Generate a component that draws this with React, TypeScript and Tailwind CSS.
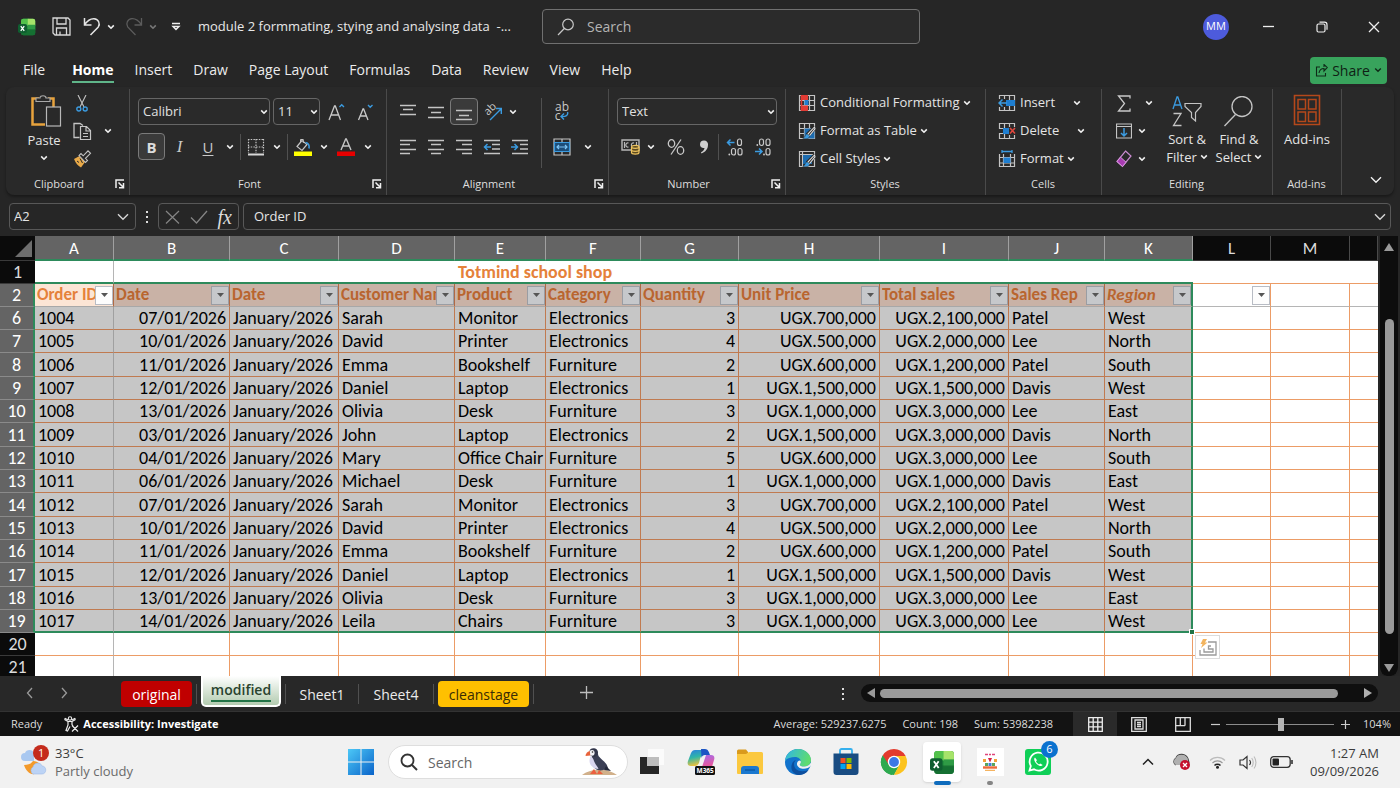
import React from 'react';

type Kids = { children?: React.ReactNode };

const Svg = ({ w = 18, h = 18, className = '', children }: Kids & { w?: number; h?: number; className?: string }) => (
  <svg width={w} height={h} viewBox={`0 0 ${w} ${h}`} fill="none" className={`shrink-0 ${className}`} aria-hidden="true">
    {children}
  </svg>
);

const Chev = ({ className = '' }: { className?: string }) => (
  <Svg w={8} h={6} className={className}>
    <path d="M1.2 1.4 4 4.2 6.8 1.4" stroke="#f0f0f0" strokeWidth="1.6" />
  </Svg>
);

const BigChev = ({ c = '#d6d6d6' }: { c?: string }) => (
  <Svg w={12} h={8}>
    <path d="M1 1.2 6 6.2 11 1.2" stroke={c} strokeWidth="1.4" />
  </Svg>
);

const Btn = ({ label, className = '', children }: Kids & { label: string; className?: string }) => (
  <button type="button" aria-label={label} className={`flex shrink-0 items-center justify-center ${className}`}>
    {children}
  </button>
);

const Drop = ({ label, className = 'w-4' }: { label: string; className?: string }) => (
  <Btn label={label} className={`h-[27px] ${className}`}>
    <Chev />
  </Btn>
);

const Sep = ({ className = 'h-7' }: { className?: string }) => <span className={`w-px shrink-0 bg-[#505050] ${className}`} />;

/* ---------- title bar ---------- */

const ExcelLogo = ({ size }: { size: number }) => (
  <svg width={size} height={size} viewBox="0 0 24 24" aria-hidden="true">
    <rect x="4" y="1" width="19" height="22" rx="3" fill="#1e8a3c" />
    <path d="M4 4a3 3 0 0 1 3-3h7v9H4z" fill="#52c14b" />
    <path d="M13 1h7a3 3 0 0 1 3 3v6H13z" fill="#a6e36a" />
    <path d="M13 9h10v7H13z" fill="#2f9b45" />
    <path d="M4 15h19v5a3 3 0 0 1-3 3H7a3 3 0 0 1-3-3z" fill="#13672f" opacity=".75" />
    <rect x="0" y="8" width="12" height="12" rx="2.4" fill="#0f5e30" />
    <path d="m3.7 10.7 4.6 6.6M8.3 10.7l-4.6 6.6" stroke="#fff" strokeWidth="1.7" />
  </svg>
);

const TitleBar = () => (
  <header className="flex h-[53px] shrink-0 items-center pl-[18px]">
    <ExcelLogo size={18} />
    <Btn label="Save" className="ml-[15px] h-8 w-5">
      <Svg w={19} h={19}>
        <path d="M1 1h15l2 2v15H3l-2-2zM5 1v6h9V1M4.500 18v-7h10v7M8 18v-3.500" stroke="#d8d8d8" strokeWidth="1.3" />
      </Svg>
    </Btn>
    <Btn label="Undo" className="ml-3 h-8 w-[18px]">
      <Svg w={18} h={19}>
        <path d="M1.500 1v7h7M1.500 7.800C4.500 3.500 7.500 1.500 11 1.700c4.500.300 6.500 5 4.300 8.200L7.500 18" stroke="#e4e4e4" strokeWidth="1.500" />
      </Svg>
    </Btn>
    <Drop label="Undo list" className="ml-1 w-3" />
    <Btn label="Redo" className="ml-2 h-8 w-[18px]">
      <Svg w={18} h={19}>
        <path d="M16.500 1v7h-7M16.500 7.800C13.500 3.500 10.500 1.500 7 1.700 2.500 2 .500 6.700 2.700 9.900L10.500 18" stroke="#5c5c5c" strokeWidth="1.3" />
      </Svg>
    </Btn>
    <span className="flex h-7 w-5 items-center justify-center opacity-40">
      <Chev />
    </span>
    <Btn label="Customize Quick Access Toolbar" className="ml-[3px] h-8 w-5">
      <Svg w={10} h={9}>
        <path d="M1 1.500h8M2 4.500 5 7.500l3-3z" stroke="#eee" strokeWidth="1.4" />
      </Svg>
    </Btn>
    <span className="ml-3 w-[330px] truncate text-[13px] text-[#e8e8e8]">module 2 formmating, stying and analysing data&nbsp; -...</span>
    <label className="ml-[14px] flex h-[35px] w-[378px] items-center gap-3 rounded border border-[#707070] bg-[#2b2b2b] px-3.5">
      <Svg w={18} h={18}>
        <circle cx="11" cy="6.500" r="5.300" stroke="#c8c8c8" strokeWidth="1.2" />
        <path d="M7.300 10.500 1 17" stroke="#c8c8c8" strokeWidth="1.2" />
      </Svg>
      <input aria-label="Search" placeholder="Search" className="w-full bg-transparent text-[14px] outline-none placeholder:text-[#b4b4b4]" />
    </label>
    <div className="ml-auto flex items-center">
      <button type="button" className="flex h-[26px] w-[26px] items-center justify-center rounded-full bg-[#4d5bdc] text-[11px] text-white">
        MM
      </button>
      <Btn label="Minimize" className="ml-[14px] h-10 w-[52px]">
        <Svg w={12} h={12}>
          <path d="M0 5.500h11" stroke="#eee" strokeWidth="1.3" />
        </Svg>
      </Btn>
      <Btn label="Restore" className="h-10 w-[53px]">
        <Svg w={12} h={12}>
          <rect x="1" y="3" width="8" height="8" rx="1.500" stroke="#eee" strokeWidth="1.2" />
          <path d="M3.500 1.200h5a2.500 2.500 0 0 1 2.500 2.500v5" stroke="#eee" strokeWidth="1.2" />
        </Svg>
      </Btn>
      <Btn label="Close" className="h-10 w-[52px]">
        <Svg w={12} h={12}>
          <path d="m1 1 10 10M11 1 1 11" stroke="#eee" strokeWidth="1.3" />
        </Svg>
      </Btn>
    </div>
  </header>
);

const menu = ['File', 'Home', 'Insert', 'Draw', 'Page Layout', 'Formulas', 'Data', 'Review', 'View', 'Help'];

const MenuBar = () => (
  <nav className="flex h-[34px] shrink-0 items-center pr-[13px] pl-[23px]">
    <div className="flex gap-[21px] pt-0.5">
      {menu.map((m) =>
        m === 'Home' ? (
          <button key={m} type="button" className="ml-1.5 border-b-2 border-[#5fb589] pb-px text-[14px] leading-[20px] font-bold text-white">
            {m}
          </button>
        ) : (
          <button key={m} type="button" className="border-b-2 border-transparent pb-px text-[14px] leading-[20px] text-[#ececec]">
            {m}
          </button>
        ),
      )}
    </div>
    <button type="button" className="ml-auto flex h-[27px] w-[77px] items-center justify-center gap-1 rounded bg-[#38a35c] text-[14px] text-[#0f1f15]">
      <Svg w={13} h={13}>
        <path d="M5 3H1.500v9h9V9M4 9c.500-3 2.500-4.500 5-4.500V7l3.300-3.500L9 .500V3" stroke="#0f2a18" strokeWidth="1.1" />
      </Svg>
      Share
      <Svg w={8} h={6}>
        <path d="M1.200 1.400 4 4.200 6.800 1.400" stroke="#0f2a18" strokeWidth="1.400" />
      </Svg>
    </button>
  </nav>
);

/* ---------- ribbon ---------- */

const Launcher = ({ label }: { label: string }) => (
  <Btn label={label} className="h-4 w-4">
    <Svg w={10} h={10}>
      <path d="M1 9V1h8M3.500 3.500 8 8M8.500 4v4.800H4" stroke="#f0f0f0" strokeWidth="1.5" />
    </Svg>
  </Btn>
);

const Group = ({ name, launcher, className = '', children }: Kids & { name: string; launcher?: boolean; className?: string }) => (
  <section aria-label={name} className={`flex shrink-0 flex-col border-r border-[#4a4a4a] ${className}`}>
    <div className="flex h-[87px]">{children}</div>
    <div className="flex h-4 items-center pr-px text-[11px] leading-4 text-[#dedede]">
      <span className="flex-1 text-center">{name}</span>
      {launcher && <Launcher label={`${name} settings`} />}
    </div>
  </section>
);

const Pick = ({ label, value, className }: { label: string; value: string; className: string }) => (
  <span className={`relative block ${className}`}>
    <select aria-label={label} defaultValue={value} className="h-[27px] w-full appearance-none rounded border border-[#666] bg-[#2a2a2a] pl-1 text-[13px] text-[#e0e0e0]">
      <option>{value}</option>
    </select>
    <Chev className="pointer-events-none absolute top-[11px] right-[2px]" />
  </span>
);

const Lines = ({ rows }: { rows: [number, number, number][] }) => (
  <Svg w={16} h={18}>
    {rows.map(([x1, x2, y]) => (
      <path key={y} d={`M${x1} ${y}.500H${x2}`} stroke="#c4c4c4" strokeWidth="1.3" />
    ))}
  </Svg>
);

const BlueArrow = ({ d }: { d: string }) => <path d={d} stroke="#3b9be0" strokeWidth="1.5" />;

const Grid = ({ children }: Kids) => (
  <Svg w={18} h={18}>
    <path d="M1.500 1.500h15v15h-15zM1.500 6.500h15M1.500 11.500h15M6.500 1.500v15M11.500 1.500v15" stroke="#c4c4c4" strokeWidth="1.2" />
    {children}
  </Svg>
);

const Brush = () => (
  <>
    <path d="M17.500 5 9.500 13" stroke="#292929" strokeWidth="4.500" />
    <path d="m16.500 5-6.800 7.300 1.700 1.500 5.600-7z" stroke="#e0e0e0" strokeWidth="1.1" />
    <path d="M9.500 12c-2 0-2.500 1.500-2.800 3l-2 1.200c2.500 1.200 7 .700 7-2.300z" fill="#3b9be0" stroke="#292929" strokeWidth=".5" />
  </>
);

const MenuButton = ({ icon, text, gap = 'gap-[3px]' }: { icon: React.ReactNode; text: string; gap?: string }) => (
  <button type="button" className="flex h-7 items-center text-[13px] whitespace-nowrap text-[#e4e4e4]">
    {icon}
    <span className={`ml-1 flex items-center ${gap}`}>
      {text}
      <Chev />
    </span>
  </button>
);

const Ribbon = () => (
  <div className="mx-[6px] flex h-[108px] shrink-0 overflow-hidden rounded-lg bg-[#292929] pt-[2px] shadow-[0_2px_3px_rgba(0,0,0,0.35)]">
    <Group name="Clipboard" launcher className="w-[124px]">
      <button type="button" className="ml-5 flex w-9 flex-col items-center pt-[6px] text-[13px] leading-[18px] text-[#e4e4e4]">
        <Svg w={32} h={36} className="ml-1">
          <path d="M9 3.500H2.500v26H15M18 3.500h5.500V12" stroke="#e8a33d" strokeWidth="2.5" />
          <path d="M6 6.500V3h4c0-3 6-3 6 0h4v3.500z" fill="#292929" stroke="#a8a8a8" strokeWidth="1.2" />
          <rect x="16.500" y="12" width="14" height="19" fill="#292929" stroke="#b8b8b8" strokeWidth="1.2" />
        </Svg>
        Paste
        <Chev className="mt-1.5" />
      </button>
      <div className="ml-[10px] flex flex-col">
        <Btn label="Cut" className="h-7 w-5">
          <Svg w={12} h={17}>
            <path d="m2 0 6 12M10 0 4 12" stroke="#c4c4c4" strokeWidth="1.1" />
            <circle cx="2.800" cy="14" r="2" stroke="#3b9be0" strokeWidth="1.4" />
            <circle cx="9.200" cy="14" r="2" stroke="#3b9be0" strokeWidth="1.4" />
          </Svg>
        </Btn>
        <div className="flex">
          <Btn label="Copy" className="h-7 w-5">
            <Svg w={19} h={19}>
              <path d="M6.500 15.500H1v-14h6l3 2" stroke="#c4c4c4" strokeWidth="1.3" />
              <path d="M7.500 4.500h6l4 4v9h-10zM13 4.500V9h4.500M10 11.500h5M10 14.500h5" stroke="#c4c4c4" strokeWidth="1.2" />
            </Svg>
          </Btn>
          <Drop label="Copy options" className="ml-2.5 w-3" />
        </div>
        <Btn label="Format Painter" className="h-7 w-5">
          <Svg w={19} h={18}>
            <path d="m1 9 5.500-3 5.500 6-4 5.500C5 16 2.500 13 1 9z" fill="#e8a948" />
            <path d="m4 11 2 1.500M7 8.500 9.500 13" stroke="#292929" strokeWidth="1" />
            <path d="m6 5.500 6.500 7 2-2-2-2.200 5-5-2.500-2.500-4.800 5L8 3.500z" fill="#292929" stroke="#c4c4c4" strokeWidth="1.1" />
          </Svg>
        </Btn>
      </div>
    </Group>

    <Group name="Font" launcher className="w-[257px]">
      <div className="flex flex-col gap-2 pt-[9px] pl-[8px]">
        <div className="flex items-center">
          <Pick label="Font" value="Calibri" className="w-[132px]" />
          <Pick label="Font size" value="11" className="ml-[3px] w-[47px]" />
          <Btn label="Increase font size" className="ml-2 h-[27px] w-[17px]">
            <Svg w={17} h={18}>
              <path d="M1 17 6.500 3h.8L12.500 17M3 12h7.800" stroke="#c8c8c8" strokeWidth="1.3" />
              <path d="m11.500 4 2.200-2.200L16 4" stroke="#3b9be0" strokeWidth="1.4" />
            </Svg>
          </Btn>
          <Btn label="Decrease font size" className="ml-3 h-[27px] w-[17px]">
            <Svg w={17} h={18}>
              <path d="M1.500 17 6 6h.6L11 17M3 13h6.500" stroke="#c8c8c8" strokeWidth="1.3" />
              <path d="m11 2 2.200 2.200L15.500 2" stroke="#3b9be0" strokeWidth="1.4" />
            </Svg>
          </Btn>
        </div>
        <div className="flex items-center">
          <button type="button" className="h-[27px] w-[27px] rounded border border-[#7a7a7a] bg-[#3a3a3a] text-[15px] leading-[22px] font-bold text-[#dcdcdc]">B</button>
          <button type="button" className="h-[27px] w-[29px] font-['Liberation_Serif',serif] text-[17px] leading-[22px] text-[#c8c8c8] italic">I</button>
          <button type="button" className="h-[27px] w-7 text-[15px] leading-[22px] text-[#c8c8c8] underline underline-offset-2">U</button>
          <Drop label="Underline options" />
          <Sep className="mx-[2px] h-[26px]" />
          <Btn label="Borders" className="h-[27px] w-[26px]">
            <Svg w={18} h={18}>
              <path d="M1.500 1v14M16.500 1v14M1 1.500h16M1 9h16M9 1v14" stroke="#c4c4c4" strokeWidth="1.2" strokeDasharray="1.5 1.2" />
              <path d="M1 16.500h16" stroke="#d8d8d8" strokeWidth="1.8" />
            </Svg>
          </Btn>
          <Drop label="Border options" />
          <Sep className="mx-[2px] h-[26px]" />
          <Btn label="Fill Color" className="h-[27px] w-[26px]">
            <Svg w={18} h={18}>
              <path d="M8 2.500 3 8.500l5 4 5-6z" stroke="#c4c4c4" strokeWidth="1.2" />
              <path d="M6.500 5V1.500h2.800V5" stroke="#c4c4c4" strokeWidth="1" />
              <path d="M11.500 4.500c3 .500 4 3 3.500 6" stroke="#3b9be0" strokeWidth="1.600" />
              <path d="M0 13.500h18v4.500H0z" fill="#ffff00" />
            </Svg>
          </Btn>
          <Drop label="Fill options" />
          <Btn label="Font Color" className="h-[27px] w-7">
            <Svg w={18} h={18}>
              <path d="M4 12 8.700 1h.6L14 12M5.700 8h6.600" stroke="#c4c4c4" strokeWidth="1.4" />
              <path d="M0 13.500h18v4.500H0z" fill="#e60000" />
            </Svg>
          </Btn>
          <Drop label="Font color options" />
        </div>
      </div>
    </Group>

    <Group name="Alignment" launcher className="w-[222px]">
      <div className="flex flex-col gap-2 pt-[9px] pl-[7px]">
        <div className="flex">
          <Btn label="Top Align" className="h-[27px] w-7">
            <Lines rows={[[0, 16, 2], [3, 13, 6], [0, 16, 11]]} />
          </Btn>
          <Btn label="Middle Align" className="h-[27px] w-7">
            <Lines rows={[[0, 16, 4], [3, 13, 9], [0, 16, 14]]} />
          </Btn>
          <Btn label="Bottom Align" className="h-[27px] w-7 rounded border border-[#7a7a7a] bg-[#3a3a3a]">
            <Lines rows={[[0, 16, 7], [3, 13, 12], [0, 16, 16]]} />
          </Btn>
          <Btn label="Orientation" className="h-[27px] w-[30px]">
            <Svg w={20} h={20} className="overflow-visible">
              <text x="0" y="0" transform="translate(5 14) rotate(-45)" fontSize="11" fill="#c8c8c8">ab</text>
              <path d="M7 18 18 7M13 6.500h5.300V12" stroke="#3b9be0" strokeWidth="1.4" />
            </Svg>
          </Btn>
          <Drop label="Orientation options" className="w-[10px]" />
        </div>
        <div className="flex">
          <Btn label="Align Left" className="h-[27px] w-7">
            <Lines rows={[[0, 16, 2], [0, 10, 6], [0, 16, 11], [0, 10, 15]]} />
          </Btn>
          <Btn label="Center" className="h-[27px] w-7">
            <Lines rows={[[0, 16, 2], [3, 13, 6], [0, 16, 11], [3, 13, 15]]} />
          </Btn>
          <Btn label="Align Right" className="h-[27px] w-7">
            <Lines rows={[[0, 16, 2], [6, 16, 6], [0, 16, 11], [6, 16, 15]]} />
          </Btn>
          <Btn label="Decrease Indent" className="h-[27px] w-7">
            <Svg w={18} h={18}>
              <path d="M1 2.500h16M9 6.500h8M9 11h8M1 15.500h16" stroke="#c4c4c4" strokeWidth="1.3" />
              <BlueArrow d="M8 9H1.500M4.500 6 1.500 9l3 3" />
            </Svg>
          </Btn>
          <Btn label="Increase Indent" className="h-[27px] w-7">
            <Svg w={18} h={18}>
              <path d="M1 2.500h16M9 6.500h8M9 11h8M1 15.500h16" stroke="#c4c4c4" strokeWidth="1.3" />
              <BlueArrow d="M0 9h6.500M3.500 6l3 3-3 3" />
            </Svg>
          </Btn>
        </div>
      </div>
      <Sep className="mt-[9px] ml-[7px] h-[70px]" />
      <div className="flex flex-col gap-2 pt-[9px] pl-1.5">
        <Btn label="Wrap Text" className="h-[27px] w-7">
          <span className="flex flex-col text-[12px] leading-[9px] text-[#c8c8c8]">
            <span>ab</span>
            <span className="flex">
              c
              <Svg w={9} h={9} className="mt-px">
                <path d="M7.500 0c1 3-1.500 5-6.500 4.500M4 1.500l-3 3 3 3" stroke="#3b9be0" strokeWidth="1.4" />
              </Svg>
            </span>
          </span>
        </Btn>
        <div className="flex">
          <Btn label="Merge and Center" className="h-[27px] w-7">
            <Svg w={18} h={18}>
              <path d="M1 1h16v16H1zM9 1v4M9 13v4" stroke="#c4c4c4" strokeWidth="1.2" />
              <path d="M1.500 4.500h15v9h-15z" fill="#1c4d78" stroke="#3b9be0" strokeWidth="1.2" />
              <path d="M4 9h10M6 7 4 9l2 2M12 7l2 2-2 2" stroke="#7cc4f5" strokeWidth="1.2" />
            </Svg>
          </Btn>
          <Drop label="Merge options" className="ml-1 w-4" />
        </div>
      </div>
    </Group>

    <Group name="Number" launcher className="w-[177px]">
      <div className="flex flex-col gap-2 pt-[9px] pl-2">
        <Pick label="Number Format" value="Text" className="w-[160px]" />
        <div className="flex items-center">
          <Btn label="Accounting Format" className="h-[27px] w-[26px]">
            <Svg w={19} h={17}>
              <path d="M1 2h17v10H1z" stroke="#b8b8b8" strokeWidth="1.4" />
              <path d="M7.500 5c-3.500-1-3.500 5 0 4M13 5c-3.500-1-3.500 5 0 4M3.500 4v6M15.500 4v3" stroke="#b8b8b8" strokeWidth="1.200" />
              <path d="M10.500 9c0-2.200 7.500-2.200 7.500 0v5.500c0 2.200-7.500 2.200-7.500 0z" fill="#5b4a20" stroke="#eec35f" strokeWidth="1.2" />
              <path d="M10.500 9c0 1.800 7.500 1.800 7.500 0M10.500 12c0 1.800 7.500 1.800 7.500 0" stroke="#eec35f" strokeWidth="1.100" />
            </Svg>
          </Btn>
          <Drop label="Accounting options" />
          <Btn label="Percent Style" className="ml-[3px] h-[27px] w-7">
            <Svg w={18} h={18}>
              <path d="M14 1.500 4 16.500" stroke="#c8c8c8" strokeWidth="1.3" />
              <ellipse cx="4.500" cy="5.500" rx="3.200" ry="3.800" stroke="#c8c8c8" strokeWidth="1.3" />
              <ellipse cx="13.500" cy="12.500" rx="3.200" ry="3.800" stroke="#c8c8c8" strokeWidth="1.3" />
            </Svg>
          </Btn>
          <Btn label="Comma Style" className="h-[27px] w-7">
            <Svg w={10} h={16}>
              <path d="M5 1.500a4 3.800 0 0 1 4 4.300C9 10 6.500 13 2.500 14.500L2 13.300c2-1 3.300-2.300 3.500-4.300-2.700.500-4.500-1.200-4.500-3.500a4 4 0 0 1 4-4z" fill="#d0d0d0" />
            </Svg>
          </Btn>
          <Sep className="mr-[2px] h-[26px]" />
          <Btn label="Increase Decimal" className="h-[27px] w-7">
            <Svg w={18} h={18}>
              <rect x="11.500" y="1" width="4" height="6.500" rx="2" stroke="#c8c8c8" strokeWidth="1.2" />
              <rect x="5.500" y="10.500" width="4" height="6.500" rx="2" stroke="#c8c8c8" strokeWidth="1.2" />
              <rect x="12" y="10.500" width="4" height="6.500" rx="2" stroke="#c8c8c8" strokeWidth="1.2" />
              <circle cx="3.300" cy="16.500" r=".9" fill="#c8c8c8" />
              <BlueArrow d="M8.500 4.500H1.500M4.500 1.500l-3 3 3 3" />
            </Svg>
          </Btn>
          <Btn label="Decrease Decimal" className="h-[27px] w-7">
            <Svg w={18} h={18}>
              <rect x="5.500" y="1" width="4" height="6.500" rx="2" stroke="#c8c8c8" strokeWidth="1.2" />
              <rect x="12" y="1" width="4" height="6.500" rx="2" stroke="#c8c8c8" strokeWidth="1.2" />
              <rect x="12" y="10.500" width="4" height="6.500" rx="2" stroke="#c8c8c8" strokeWidth="1.2" />
              <circle cx="3.300" cy="7" r=".9" fill="#c8c8c8" />
              <circle cx="10" cy="16.500" r=".9" fill="#c8c8c8" />
              <BlueArrow d="M1 13.500h7M5 10.500l3 3-3 3" />
            </Svg>
          </Btn>
        </div>
      </div>
    </Group>

    <Group name="Styles" className="w-[200px]">
      <div className="flex flex-col items-start pl-3">
        <MenuButton
          text="Conditional Formatting"
          icon={
            <Grid>
              <path d="M4 1h6v5H4zM4 11.500h6V17H4z" fill="#e23b34" />
              <path d="M6.500 6h4v5h-4z" fill="#1f7fd1" />
              <path d="M3.500 1v16" stroke="#e23b34" strokeWidth="1.600" />
            </Grid>
          }
        />
        <MenuButton
          text="Format as Table"
          icon={
            <Grid>
              <path d="M6.500 6.500h10v10h-10z" fill="#1c6cb0" />
              <Brush />
            </Grid>
          }
        />
        <MenuButton
          text="Cell Styles"
          icon={
            <Svg w={18} h={18}>
              <path d="M1.500 1.500h15v15h-15zM1.500 4.500h15M4.500 1.500v15" stroke="#c4c4c4" strokeWidth="1.2" />
              <path d="M5 5h9v9H5z" fill="#1c6cb0" />
              <Brush />
            </Svg>
          }
        />
      </div>
    </Group>

    <Group name="Cells" className="w-[116px]">
      <div className="flex flex-col items-start pl-3">
        <MenuButton
          text="Insert"
          gap="gap-[18px]"
          icon={
            <Grid>
              <path d="M5 6h12v6H5z" fill="#1f7fd1" />
              <path d="M0 5h8v8H0z" fill="#292929" />
              <BlueArrow d="M9 9H1M4.500 5.500 1 9l3.500 3.500" />
            </Grid>
          }
        />
        <MenuButton
          text="Delete"
          gap="gap-[18px]"
          icon={
            <Grid>
              <path d="M5 6h8v6H5z" fill="#1f7fd1" />
              <path d="M11 5h7v8h-7zM0 7h4v4H0z" fill="#292929" />
              <path d="m12 6 5 5.500M17 6l-5 5.500" stroke="#e0483e" strokeWidth="1.6" />
            </Grid>
          }
        />
        <MenuButton
          text="Format"
          icon={
            <Svg w={18} h={18}>
              <path d="M1.500 4v12.500h15V4M1.500 7.500h15M1.500 13h15M5.500 4v12.500M12.500 4v12.500" stroke="#c4c4c4" strokeWidth="1.2" />
              <path d="M5.500 7.500h7V13h-7z" fill="#1f7fd1" />
              <path d="M4 1.500h10M4 0v3M14 0v3" stroke="#3b9be0" strokeWidth="1.300" />
            </Svg>
          }
        />
      </div>
    </Group>

    <Group name="Editing" className="w-[171px]">
      <div className="flex w-[59px] flex-col pl-[13px]">
        <div className="flex h-7 items-center">
          <Btn label="AutoSum" className="h-7 w-[18px]">
            <Svg w={14} h={17}>
              <path d="M13 3.500V1H1.500l6 7.500-6 7.500H13v-2.500" stroke="#c8c8c8" strokeWidth="1.3" />
            </Svg>
          </Btn>
          <Drop label="AutoSum options" className="ml-[8px] w-4" />
        </div>
        <div className="flex h-7 items-center">
          <Btn label="Fill" className="h-7 w-[18px]">
            <Svg w={16} h={16}>
              <path d="M.500 1h15v14h-15zM.500 3.500h15" stroke="#c4c4c4" strokeWidth="1.2" />
              <BlueArrow d="M8 5v8M5 10l3 3 3-3" />
            </Svg>
          </Btn>
          <Drop label="Fill options" className="ml-px w-4" />
        </div>
        <div className="flex h-7 items-center">
          <Btn label="Clear" className="h-7 w-[18px]">
            <Svg w={16} h={18}>
              <path d="M9.500 1 15 6 6.500 16.500 1 11.500z" stroke="#c98bd0" strokeWidth="1.2" />
              <path d="m4.500 7.200 5.500 5-3.500 4.300L1 11.500z" fill="#a93bb3" stroke="#d79bdc" strokeWidth="1" />
            </Svg>
          </Btn>
          <Drop label="Clear options" className="ml-px w-4" />
        </div>
      </div>
      <button type="button" className="flex w-[52px] flex-col items-center pt-[7px] text-[13px] leading-[18px] text-[#e4e4e4]">
        <Svg w={32} h={34}>
          <path d="M2 13 6 1h.8L11 13M3.500 9h6" stroke="#3b9be0" strokeWidth="1.3" />
          <path d="M2.500 17.500h7.500L2.500 29.500H10.500" stroke="#c4c4c4" strokeWidth="1.3" />
          <path d="M14 7.500h16v3l-5.500 6v8.500l-4-3.500v-5l-6.500-6z" stroke="#c4c4c4" strokeWidth="1.2" />
        </Svg>
        <span>Sort &amp;</span>
        <span className="flex items-center gap-[3px]">
          Filter
          <Chev />
        </span>
      </button>
      <button type="button" className="flex w-[52px] flex-col items-center pt-[7px] text-[13px] leading-[18px] text-[#e4e4e4]">
        <Svg w={32} h={34}>
          <ellipse cx="19" cy="10.500" rx="10" ry="10" stroke="#c4c4c4" strokeWidth="1.3" />
          <path d="M12.500 18.500 1.500 30" stroke="#c4c4c4" strokeWidth="1.3" />
        </Svg>
        <span>Find &amp;</span>
        <span className="flex items-center gap-[3px]">
          Select
          <Chev />
        </span>
      </button>
    </Group>

    <Group name="Add-ins" className="w-[69px]">
      <button type="button" className="flex w-full flex-col items-center pt-[7px] text-[13px] leading-[18px] text-[#e4e4e4]">
        <Svg w={32} h={34} className="overflow-visible">
          <path d="M3.500 -.500h25v29h-25z" stroke="#b5481b" strokeWidth="1.6" />
          <path d="M7 3.500h7.500v9.500H7zM17.500 3.500H25v9.500h-7.500zM7 16h7.500v9.500H7zM17.500 16H25v9.500h-7.500z" stroke="#b5481b" strokeWidth="1.5" />
        </Svg>
        Add-ins
      </button>
    </Group>

    <Btn label="Collapse ribbon" className="mr-1 mb-[3px] ml-auto h-6 w-7 self-end">
      <BigChev c="#eee" />
    </Btn>
  </div>
);

/* ---------- formula bar ---------- */

const FormulaBar = () => (
  <div className="flex h-[41px] shrink-0 items-center px-[9px] pt-[2px] text-[14px] text-[#e6e6e6]">
    <div className="flex h-[27px] w-[127px] items-center rounded border border-[#585858] pr-1.5">
      <input aria-label="Name Box" defaultValue="A2" className="w-full min-w-0 bg-transparent pl-1 text-[13px] outline-none" />
      <Btn label="Name list" className="h-6 w-3">
        <BigChev />
      </Btn>
    </div>
    <Svg w={4} h={14} className="mx-[9px]">
      <path d="M1 1h2v2H1zM1 6h2v2H1zM1 11h2v2H1z" fill="#ddd" />
    </Svg>
    <div className="flex h-[27px] w-[81px] items-center justify-between rounded border border-[#585858] px-1.5">
      <Btn label="Cancel">
        <Svg w={15} h={14}>
          <path d="m1 1 13 12.500M14 1 1 13.500" stroke="#858585" strokeWidth="1.2" />
        </Svg>
      </Btn>
      <Btn label="Enter">
        <Svg w={18} h={14}>
          <path d="m1 7.500 5.500 5.500L17 1" stroke="#858585" strokeWidth="1.3" />
        </Svg>
      </Btn>
      <button type="button" className="font-['Liberation_Serif',serif] text-[20px] leading-5 text-[#dcdcdc] italic">fx</button>
    </div>
    <div className="ml-1 flex h-[27px] min-w-0 flex-1 items-center rounded border border-[#585858] pr-1">
      <input aria-label="Formula" defaultValue="Order ID" className="w-full bg-transparent pl-2.5 text-[13px] outline-none" />
      <Btn label="Expand formula bar" className="h-6 w-3">
        <BigChev />
      </Btn>
    </div>
  </div>
);

/* ---------- sheet ---------- */

const letters = ['A', 'B', 'C', 'D', 'E', 'F', 'G', 'H', 'I', 'J', 'K', 'L', 'M', ''];
const headings = ['Order ID', 'Date', 'Date', 'Customer Name', 'Product', 'Category', 'Quantity', 'Unit Price', 'Total sales', 'Sales Rep', 'Region'];

const rows: string[][] = [
  ['6', '1004', '07/01/2026', 'Sarah', 'Monitor', 'Electronics', '3', '700,000', '2,100,000', 'Patel', 'West'],
  ['7', '1005', '10/01/2026', 'David', 'Printer', 'Electronics', '4', '500,000', '2,000,000', 'Lee', 'North'],
  ['8', '1006', '11/01/2026', 'Emma', 'Bookshelf', 'Furniture', '2', '600,000', '1,200,000', 'Patel', 'South'],
  ['9', '1007', '12/01/2026', 'Daniel', 'Laptop', 'Electronics', '1', '1,500,000', '1,500,000', 'Davis', 'West'],
  ['10', '1008', '13/01/2026', 'Olivia', 'Desk', 'Furniture', '3', '1,000,000', '3,000,000', 'Lee', 'East'],
  ['11', '1009', '03/01/2026', 'John', 'Laptop', 'Electronics', '2', '1,500,000', '3,000,000', 'Davis', 'North'],
  ['12', '1010', '04/01/2026', 'Mary', 'Office Chair', 'Furniture', '5', '600,000', '3,000,000', 'Lee', 'South'],
  ['13', '1011', '06/01/2026', 'Michael', 'Desk', 'Furniture', '1', '1,000,000', '1,000,000', 'Davis', 'East'],
  ['14', '1012', '07/01/2026', 'Sarah', 'Monitor', 'Electronics', '3', '700,000', '2,100,000', 'Patel', 'West'],
  ['15', '1013', '10/01/2026', 'David', 'Printer', 'Electronics', '4', '500,000', '2,000,000', 'Lee', 'North'],
  ['16', '1014', '11/01/2026', 'Emma', 'Bookshelf', 'Furniture', '2', '600,000', '1,200,000', 'Patel', 'South'],
  ['17', '1015', '12/01/2026', 'Daniel', 'Laptop', 'Electronics', '1', '1,500,000', '1,500,000', 'Davis', 'West'],
  ['18', '1016', '13/01/2026', 'Olivia', 'Desk', 'Furniture', '3', '1,000,000', '3,000,000', 'Lee', 'East'],
  ['19', '1017', '14/01/2026', 'Leila', 'Chairs', 'Furniture', '3', '1,000,000', '3,000,000', 'Lee', 'West'],
];

const FilterButton = ({ light }: { light?: boolean }) => (
  <button
    type="button"
    aria-label="Filter"
    className={`flex h-[19px] w-[18px] shrink-0 items-center justify-center border ${light ? 'border-[#b8bcc4] bg-[#fdfdfd]' : 'border-[#9a9da3] bg-[#c6c8cb]'}`}
  >
    <Svg w={7} h={4}>
      <path d="M0 0h7L3.500 4z" fill="#555" />
    </Svg>
  </button>
);

const selHead = 'bg-[#646464] text-white';
const plainHead = 'bg-[#0b0b0b] text-[#dcdcdc]';

const RowHead = ({ n, selected }: { n: string; selected?: boolean }) => (
  <th
    scope="row"
    className={`border-b p-0 text-center text-[18px] leading-[20px] font-normal ${selected ? `${selHead} border-r-2 border-r-[#2d8a5b] border-b-[#8a8a8a]` : `${plainHead} border-b-[#3a3a3a]`}`}
  >
    {n}
  </th>
);

const rightAligned = [1, 6, 7, 8];

const Sheet = () => (
  <div className="flex min-h-0 flex-1 overflow-hidden">
    <div className="min-w-0 flex-1 overflow-hidden bg-white">
      <table className="w-full table-fixed border-separate border-spacing-0 font-['Carlito','Lato',sans-serif] text-[18px] leading-[20px] text-black">
        <colgroup>
          <col className="w-[35px]" />
          <col className="w-[79px]" />
          <col className="w-[116px]" />
          <col className="w-[109px]" />
          <col className="w-[116px]" />
          <col className="w-[91px]" />
          <col className="w-[95px]" />
          <col className="w-[98px]" />
          <col className="w-[141px]" />
          <col className="w-[129px]" />
          <col className="w-[96px]" />
          <col className="w-[88px]" />
          <col className="w-[78px]" />
          <col className="w-[79px]" />
          <col />
        </colgroup>
        <thead>
          <tr className="h-[25px]">
            <th className="border-b border-[#3a3a3a] bg-[#0b0b0b] p-0">
              <Svg w={19} h={18} className="ml-[14px]">
                <path d="M18 1v17H1z" fill="#6e6e6e" />
              </Svg>
            </th>
            {letters.map((l, i) => (
              <th
                key={i}
                scope="col"
                className={`border-r p-0 pt-0.5 text-[17px] font-normal ${i < 11 ? `${selHead} border-b-2 border-r-[#a0a0a0] border-b-[#2d8a5b]` : `${plainHead} border-b border-r-[#4a4a4a] border-b-[#3a3a3a]`}`}
              >
                {l}
              </th>
            ))}
          </tr>
        </thead>
        <tbody>
          <tr className="h-[23px]">
            <RowHead n="1" />
            <td className="border-r border-b-2 border-r-[#b5b5b5] border-b-[#2d8a5b] p-0" />
            <td colSpan={3} className="border-b-2 border-[#2d8a5b] p-0" />
            <td colSpan={7} className="border-b-2 border-[#2d8a5b] p-0 pl-[3px] font-bold text-[#e5813a]">
              Totmind school shop
            </td>
            <td colSpan={3} className="border-b border-[#ec9c66] p-0" />
          </tr>
          <tr className="h-[23px] text-[17px]">
            <RowHead n="2" selected />
            {headings.map((h, i) => (
              <td
                key={i}
                className={`border-b border-b-[#a8a8a8] p-0 ${i === 0 ? 'bg-[#fce5d5] text-[#e5813a]' : 'bg-[#c9b2a6] text-[#b9652f]'} ${i === 10 ? 'border-r-2 border-r-[#2d8a5b] italic' : 'border-r border-r-[#b06a45]'}`}
              >
                <div className="flex h-[21px] items-center pl-[2px]">
                  <span className="min-w-0 flex-1 overflow-hidden font-bold whitespace-nowrap">{h}</span>
                  <FilterButton light={i === 0} />
                </div>
              </td>
            ))}
            <td className="border-r border-b border-r-[#ec9c66] border-b-[#b5b5b5] p-0">
              <div className="flex justify-end">
                <FilterButton light />
              </div>
            </td>
            <td className="border-r border-b border-r-[#ec9c66] border-b-[#b5b5b5] p-0" />
            <td className="border-b border-b-[#b5b5b5] p-0" />
          </tr>
          {rows.map(([n, id, date, customer, product, category, qty, unit, total, rep, region], r) => {
            const last = r === rows.length - 1;
            const cells = [id, date, 'January/2026', customer, product, category, qty, `UGX.${unit}`, `UGX.${total}`, rep, region];
            return (
              <tr key={n} className={r % 3 === 2 ? 'h-[24px]' : 'h-[23px]'}>
                <RowHead n={n} selected />
                {cells.map((c, i) => (
                  <td
                    key={i}
                    className={`relative bg-[#c6c6c6] p-0 pl-[3px] ${rightAligned.includes(i) ? 'pr-[3px] text-right' : 'text-left'} ${last ? 'border-b-2 border-b-[#2d8a5b]' : 'border-b border-b-[#c07a50]'} ${i === 10 ? 'border-r-2 border-r-[#2d8a5b]' : i === 0 ? 'border-r border-r-[#a0a0a0]' : 'border-r border-r-[#c07a50]'}`}
                  >
                    <div className="h-[20px] overflow-hidden whitespace-nowrap">{c}</div>
                    {last && i === 10 && <span className="absolute -right-1 -bottom-1 z-10 h-[6px] w-[6px] border border-white bg-[#217346]" />}
                  </td>
                ))}
                <td className="border-r border-b border-[#ec9c66] p-0" />
                <td className="border-r border-b border-[#ec9c66] p-0" />
                <td className="border-b border-[#ec9c66] p-0" />
              </tr>
            );
          })}
          {['20', '21'].map((n) => (
            <tr key={n} className="h-[23px]">
              <RowHead n={n} />
              {letters.map((l, i) => (
                <td key={i} className={`relative border-b border-b-[#ec9c66] p-0 ${i === 0 ? 'border-r border-r-[#b5b5b5]' : i < 13 ? 'border-r border-r-[#ec9c66]' : ''}`}>
                  {n === '20' && l === 'L' && (
                    <button type="button" aria-label="Quick Analysis" className="absolute top-[2px] left-[2px] z-10 flex h-[24px] w-[25px] items-center justify-center border border-[#dcdcdc] bg-white">
                      <Svg w={18} h={17}>
                        <path d="M9 3h8v13H1v-5M5 9.500v3.500h9V10H9.500V7H12" stroke="#9a9a9a" strokeWidth="1.3" />
                        <path d="M4 0h4L6 3.500h2.500L2 9l1.500-4H1.500z" fill="#f2b45f" />
                      </Svg>
                    </button>
                  )}
                </td>
              ))}
            </tr>
          ))}
        </tbody>
      </table>
    </div>
    <div className="flex w-[22px] shrink-0 flex-col items-center rounded-b-[9px] border-x-2 border-[#262626] bg-[#0d0d0d] pt-[5px] pb-[2px]">
      <Btn label="Scroll up" className="h-3 w-4">
        <Svg w={10} h={8}>
          <path d="M5 0 10 8H0z" fill="#9a9a9a" />
        </Svg>
      </Btn>
      <div className="mt-[66px] mb-7 w-[9px] flex-1 rounded-full bg-[#9a9a9a]" />
      <Btn label="Scroll down" className="h-3 w-4">
        <Svg w={10} h={8}>
          <path d="M0 0h10L5 8z" fill="#9a9a9a" />
        </Svg>
      </Btn>
    </div>
  </div>
);

const SheetTabs = () => (
  <div className="flex h-[35px] shrink-0 items-start bg-[#282828] text-[14px] text-[#ececec]">
    <Btn label="Previous sheet" className="ml-5 h-[33px] w-[18px]">
      <Svg w={7} h={12}>
        <path d="M6 1 1.500 6 6 11" stroke="#9a9a9a" strokeWidth="1.3" />
      </Svg>
    </Btn>
    <Btn label="Next sheet" className="ml-[17px] h-[33px] w-[18px]">
      <Svg w={7} h={12}>
        <path d="M1 1l4.500 5L1 11" stroke="#9a9a9a" strokeWidth="1.3" />
      </Svg>
    </Btn>
    <button type="button" className="mt-[5px] ml-[48px] h-[26px] w-[71px] rounded bg-[#c00000] pt-0.5 leading-[22px] text-white">original</button>
    <Sep className="mt-2 mr-[4px] ml-[4px] h-5" />
    <button type="button" className="h-[31px] w-[80px] rounded-b-[5px] border-x-2 border-b-2 border-white bg-linear-to-b from-white to-[#b3cbb0] text-[#29432f]">
      <span className="inline-block border-b-2 border-[#217346] leading-[21px] font-semibold">modified</span>
    </button>
    <Sep className="mt-2 ml-[4px] h-5" />
    <button type="button" className="mt-[5px] h-[26px] w-[72px] pt-0.5 leading-[22px]">Sheet1</button>
    <Sep className="mt-2 h-5" />
    <button type="button" className="mt-[5px] h-[26px] w-[74px] pt-0.5 leading-[22px]">Sheet4</button>
    <Sep className="mt-2 mr-[4px] h-5" />
    <button type="button" className="mt-[5px] h-[26px] w-[91px] rounded bg-[#ffc000] pt-0.5 leading-[22px] text-[#3a2c05]">cleanstage</button>
    <Sep className="mt-2 ml-[4px] h-5" />
    <Btn label="New sheet" className="ml-[42px] h-[33px] w-5">
      <Svg w={13} h={13}>
        <path d="M6.500 0v13M0 6.500h13" stroke="#bdbdbd" strokeWidth="1.3" />
      </Svg>
    </Btn>
    <Svg w={4} h={14} className="mt-[11px] mr-4 ml-auto">
      <path d="M1 1h2v2H1zM1 6h2v2H1zM1 11h2v2H1z" fill="#ddd" />
    </Svg>
    <div className="mt-2 mr-[22px] flex h-[18px] w-[517px] items-center justify-between rounded-full bg-[#0f0f0f] px-1.5">
      <Btn label="Scroll left">
        <Svg w={8} h={10}>
          <path d="M8 0v10L0 5z" fill="#9a9a9a" />
        </Svg>
      </Btn>
      <div className="mr-[26px] ml-[5px] h-[9px] flex-1 rounded-full bg-[#9a9a9a]" />
      <Btn label="Scroll right">
        <Svg w={8} h={10}>
          <path d="M0 0v10l8-5z" fill="#b0b0b0" />
        </Svg>
      </Btn>
    </div>
  </div>
);

const StatusBar = () => (
  <footer className="flex h-[25px] shrink-0 items-center border-t border-[#333] bg-[#131313] pr-[9px] pl-[11px] text-[11px] text-[#dcdcdc]">
    <span>Ready</span>
    <button type="button" className="ml-[21px] flex items-center gap-1 font-bold text-white">
      <Svg w={16} h={16}>
        <circle cx="7" cy="2.500" r="1.700" stroke="#eee" strokeWidth="1.1" />
        <path d="M1.500 3.500 5 5.500v3.500L3 14.500l1.500.500L7 10.500M12.500 3.500 9 5.500v3l1 1.500M5 5.500h4M1.500 3.500l.700-1 3 1.500M12.500 3.500l-.7-1-3 1.500M9 9.500l6 6M15 9.500l-6 6" stroke="#eee" strokeWidth="1.2" />
      </Svg>
      Accessibility: Investigate
    </button>
    <span className="ml-auto">Average: 529237.6275</span>
    <span className="ml-4">Count: 198</span>
    <span className="ml-4">Sum: 53982238</span>
    <Btn label="Normal view" className="ml-5 h-[24px] w-11 bg-[#2a2a2a]">
      <Svg w={15} h={15}>
        <path d="M.700.700h13.600v13.600H.700zM.700 5.200h13.600M.700 9.800h13.600M5.200.700v13.600M9.800.700v13.600" stroke="#eee" strokeWidth="1.3" />
      </Svg>
    </Btn>
    <Btn label="Page layout view" className="h-[24px] w-11">
      <Svg w={16} h={15}>
        <path d="M.700.700h14.600v13.600H.700zM4 3h8v9H4zM6 5.500h4M6 7.500h4M6 9.500h4" stroke="#ddd" strokeWidth="1.3" />
      </Svg>
    </Btn>
    <Btn label="Page break view" className="h-[24px] w-11">
      <Svg w={16} h={15}>
        <path d="M.700.700h14.600v13.600H.700zM5.300.700v8M10 .700v8M.700 8.700H10" stroke="#ddd" strokeWidth="1.3" />
      </Svg>
    </Btn>
    <Btn label="Zoom out" className="ml-[2px] h-5 w-4">
      <Svg w={9} h={9}>
        <path d="M0 4.500h9" stroke="#ccc" strokeWidth="1.2" />
      </Svg>
    </Btn>
    <input
      type="range"
      aria-label="Zoom"
      min={0}
      max={100}
      defaultValue={51}
      className="mx-[3px] h-4 w-[108px] appearance-none bg-[linear-gradient(#8c8c8c,#8c8c8c)] bg-[length:100%_1px] bg-center bg-no-repeat [&::-webkit-slider-thumb]:h-[13px] [&::-webkit-slider-thumb]:w-[6px] [&::-webkit-slider-thumb]:appearance-none [&::-webkit-slider-thumb]:bg-[#b5b5b5]"
    />
    <Btn label="Zoom in" className="h-5 w-4">
      <Svg w={9} h={9}>
        <path d="M0 4.500h9M4.500 0v9" stroke="#ccc" strokeWidth="1.2" />
      </Svg>
    </Btn>
    <span className="ml-2.5 whitespace-nowrap">104%</span>
  </footer>
);

/* ---------- taskbar ---------- */

const Weather = () => (
  <Svg w={30} h={34}>
    <path d="M4 16a4 4 0 0 1 0-8c1-4 8-4 9 0v8z" fill="#a9c8f0" />
    <path d="M3 20c4 0 7-1 9-4 4 0 8 3 8 6l-6 7c-5 1-9-3-11-9z" fill="#f39a2b" />
    <path d="M12 29a4 4 0 0 1 0-7c1-5 8-5 9-1 5 0 5 8 0 8z" fill="#bcd3f5" stroke="#9dbbe6" strokeWidth=".6" />
    <circle cx="20" cy="8" r="8" fill="#c42b1c" />
    <text x="17" y="12" fontSize="11" fill="#fff">1</text>
  </Svg>
);

const Puffin = () => (
  <Svg w={38} h={30}>
    <path d="M1 28c5-4 13-6 20-5 6 0 11 2 15 5z" fill="#d1b08a" />
    <path d="M13 4c3 0 4 2 4.500 5 3 4 8 6 9.500 12l-2 1c-6 3-12 1-14-5-1-4 0-8 2-13z" fill="#3b3f55" />
    <path d="M9.500 9c2 1 3 3 3.500 5 1.500 4 4 6 4.500 8-5 0-9-4-9-8 0-2 .500-3 1-5z" fill="#d9d6ef" />
    <path d="M8.500 4.500c0-4.500 8.500-4.500 8.500 1 0 2-2 4.500-4 4.500-3 0-4.500-2.500-4.500-5.500z" fill="#33364a" />
    <ellipse cx="11" cy="5.800" rx="2.600" ry="2.900" fill="#f2f2f7" />
    <circle cx="11.500" cy="5" r=".8" fill="#222" />
    <path d="M8.800 4C6 4.500 5 6.500 4.500 9l4.800-.500z" fill="#e8623a" />
    <path d="M25 19l5 5-7-1z" fill="#24283a" />
    <path d="m13 22-4 5h7zM18 23l-2 4h6z" fill="#ec6040" />
  </Svg>
);

const TaskApp = ({ label, className = '', children }: Kids & { label: string; className?: string }) => (
  <Btn label={label} className={`relative h-[46px] w-12 ${className}`}>
    {children}
  </Btn>
);

const Taskbar = () => (
  <div className="grid h-[52px] shrink-0 grid-cols-[1fr_auto_1fr] items-center bg-[#f1f1f1] text-[13px] text-[#3b3b3b]">
    <button type="button" className="flex items-center gap-1 pl-[21px] text-left">
      <Weather />
      <span className="flex flex-col leading-[18px]">
        <span>33°C</span>
        <span className="text-[#6a6a6a]">Partly cloudy</span>
      </span>
    </button>
    <div className="flex items-center pl-[10px]">
      <Btn label="Start" className="mr-[14px] h-[46px] w-[26px]">
        <Svg w={26} h={26}>
          <defs>
            <linearGradient id="win" x1="0" y1="0" x2="1" y2="1">
              <stop stopColor="#4cc8f7" />
              <stop offset="1" stopColor="#0a63c9" />
            </linearGradient>
          </defs>
          <path d="M0 0h12.500v12.500H0zM13.500 0H26v12.500H13.500zM0 13.500h12.500V26H0zM13.500 13.500H26V26H13.500z" fill="url(#win)" />
        </Svg>
      </Btn>
      <label className="flex h-[34px] w-[240px] items-center rounded-full border border-[#dedede] bg-white pr-2 pl-[11px]">
        <Svg w={18} h={18}>
          <circle cx="7.500" cy="7.500" r="6" stroke="#333" strokeWidth="1.8" />
          <path d="m12 12 5 5" stroke="#333" strokeWidth="2" />
        </Svg>
        <input aria-label="Search Windows" placeholder="Search" className="ml-[10px] w-full min-w-0 text-[14px] outline-none placeholder:text-[#666]" />
        <Puffin />
      </label>
      <TaskApp label="Task View">
        <Svg w={28} h={28}>
          <path d="M10 1h16v16H10z" fill="#fbfbfb" />
          <path d="M2 9h19v17H2z" fill="#262626" />
          <path d="M9 9h12v9H9z" fill="#bdbdbd" />
        </Svg>
      </TaskApp>
      <TaskApp label="Microsoft 365 Copilot" className="ml-0.5">
        <Svg w={30} h={28}>
          <defs>
            <linearGradient id="cp" x1="0" y1="0" x2="0.300" y2="1">
              <stop stopColor="#2a7de1" />
              <stop offset=".5" stopColor="#2fb6a8" />
              <stop offset="1" stopColor="#f2c23a" />
            </linearGradient>
            <linearGradient id="cq" x1="0" y1="0" x2="0.200" y2="1">
              <stop stopColor="#a86be8" />
              <stop offset="1" stopColor="#e8589b" />
            </linearGradient>
          </defs>
          <path d="M8 2h9c3 0 4 2 5 5h-5c-2 0-3 1-4 4l-1 4c-1 2-2 3-4 3H4c-3 0-4-2-3-5l3-8c1-2 2-3 4-3z" fill="url(#cp)" />
          <path d="M14 1h4c3 0 4 3 5 6h-5c-2 0-3 1-3.500 3z" fill="#1c55c4" />
          <path d="M19 7h5c3 0 4 2 3 5l-2 7H15z" fill="url(#cq)" />
          <rect x="8" y="18" width="20" height="9" rx="1.500" fill="#111" />
          <text x="9.500" y="25" fontSize="6.500" fontWeight="700" fill="#fff">M365</text>
        </Svg>
      </TaskApp>
      <TaskApp label="File Explorer">
        <Svg w={28} h={26}>
          <path d="M1 2a1.500 1.500 0 0 1 1.500-1.500H10L12 3v5H1z" fill="#d99a1c" />
          <path d="M1 5h9l3-2h12.500A1.500 1.500 0 0 1 27 4.500V24a1 1 0 0 1-1 1H2a1 1 0 0 1-1-1z" fill="#fbc83f" />
          <path d="M5 25v-5a3 3 0 0 1 3-3h12a3 3 0 0 1 3 3v5z" fill="#1b78cf" />
          <path d="M9 21h10" stroke="#0d5aa6" strokeWidth="1.500" />
        </Svg>
      </TaskApp>
      <TaskApp label="Microsoft Edge">
        <Svg w={28} h={28}>
          <defs>
            <linearGradient id="eg" x1="0" y1="0" x2="1" y2=".3">
              <stop stopColor="#2fb5e8" />
              <stop offset="1" stopColor="#5fdc70" />
            </linearGradient>
          </defs>
          <circle cx="14" cy="14" r="13" fill="#1273cc" />
          <path d="M1 13C2 5 8 1 14 1c8 0 13 6 13 11 0 4-3 6.500-7 6.500-3 0-5-1-4-2.500 2-3 0-7-5-7-4 0-8 1-10 4z" fill="url(#eg)" />
          <path d="M10 16c0 6 6 9 14.500 6C22 26 18 27 14.500 27 9 26 6 21 8 16c.500-2 2-3.500 4-4-1 1-2 2-2 4z" fill="#0d4f9e" />
          <path d="M16 16c-1 1.500 1 2.500 4 2.500 3 0 5.500-1.500 7-4v3c-4 5-13 4-14-1-.300-2 1-4 3-4 1.500 1 1 2.500 0 3.500z" fill="#f1f1f1" />
        </Svg>
      </TaskApp>
      <TaskApp label="Microsoft Store">
        <Svg w={28} h={28}>
          <path d="M8 6V2.500A1.500 1.500 0 0 1 9.500 1h9A1.500 1.500 0 0 1 20 2.500V6" stroke="#35b0ee" strokeWidth="1.800" />
          <path d="M1.500 5.500h25V24a3 3 0 0 1-3 3h-19a3 3 0 0 1-3-3z" fill="#194c82" />
          <path d="M8.500 10h5v5h-5z" fill="#f25022" />
          <path d="M14.500 10h5v5h-5z" fill="#7fba00" />
          <path d="M8.500 16h5v5h-5z" fill="#00a4ef" />
          <path d="M14.500 16h5v5h-5z" fill="#ffb900" />
        </Svg>
      </TaskApp>
      <TaskApp label="Google Chrome">
        <Svg w={28} h={28}>
          <path d="M14 14 2.700 7.500A13 13 0 0 1 25.300 7.500z" fill="#e33b2e" />
          <path d="M14 14 2.700 7.500A13 13 0 0 0 14 27l5.600-9.700z" fill="#2da94f" />
          <path d="M14 8h11.600A13 13 0 0 1 14 27l5.200-10z" fill="#fcc31e" />
          <path d="M2.700 7.500 8.800 17 14 14V8h11.500L25 7z" fill="#e33b2e" />
          <path d="M2.700 7.500 8.800 17l5.200 3-2 7A13 13 0 0 1 2.700 7.500z" fill="#2da94f" />
          <circle cx="14" cy="14" r="6.200" fill="#fff" />
          <circle cx="14" cy="14" r="4.900" fill="#3b78e7" />
        </Svg>
      </TaskApp>
      <TaskApp label="Excel">
        <span className="flex h-10 w-[38px] items-center justify-center rounded bg-white shadow-sm">
          <ExcelLogo size={25} />
        </span>
        <span className="absolute bottom-0 h-[4px] w-[17px] rounded-full bg-[#0f6cbd]" />
      </TaskApp>
      <TaskApp label="School app">
        <span className="flex h-7 w-[27px] items-center justify-center bg-white">
          <Svg w={16} h={18}>
            <path d="M3 1.500h3M7 1.500h2M10 1.500h3" stroke="#e0457b" strokeWidth="1.6" />
            <path d="M1 6h3v3H1zM12 6h3v3h-3z" fill="#f3a23a" />
            <path d="M6 5h4L8 9.500z" fill="#d62246" />
            <path d="M3 10h3v3H3zM10 10h3v3h-3z" fill="#58a55c" />
            <path d="M6.500 10h3v3h-3z" fill="#3d7fd6" />
            <path d="M1 14.500h14" stroke="#ee6a3a" strokeWidth="2.400" />
            <path d="M3 17.300h10" stroke="#f3a23a" strokeWidth="1" />
          </Svg>
        </span>
        <span className="absolute bottom-0 h-[4px] w-[6px] rounded-full bg-[#858585]" />
      </TaskApp>
      <TaskApp label="WhatsApp">
        <Svg w={28} h={28}>
          <rect x="1" y="1" width="26" height="26" rx="3" fill="#0fcf57" />
          <path d="m5.500 22.500 1.300-4.500A9 9 0 1 1 10 21.300z" stroke="#fff" strokeWidth="1.8" />
          <path d="M11 9.500c-2 1.500 0 5 2 6.700 2 1.800 4.500 2.800 5.700.8l-2.500-1.500-1.200 1c-1.500-.800-2.500-2-3-3.200l1-1.100z" fill="#fff" />
        </Svg>
        <span className="absolute top-[2px] right-[4px] flex h-[17px] w-[17px] items-center justify-center rounded-full bg-[#0b72cf] text-[11px] text-white">6</span>
      </TaskApp>
    </div>
    <div className="flex items-center justify-self-end pr-[21px]">
      <Btn label="Show hidden icons" className="mr-[18px]">
        <Svg w={12} h={8}>
          <path d="m1 6.500 5-5 5 5" stroke="#222" strokeWidth="1.5" />
        </Svg>
      </Btn>
      <Btn label="OneDrive" className="mr-[17px]">
        <Svg w={20} h={18}>
          <path d="M4 12a4 4 0 0 1 0-7c2-5 10-5 12 1l1 4" stroke="#444" strokeWidth="1.3" />
          <path d="M4 12a4 4 0 0 1 0-7c2-5 10-4 12 1l-4 6z" fill="#b0b0b0" />
          <circle cx="13" cy="12" r="5" fill="#c50f2b" />
          <path d="m11 10 4 4M15 10l-4 4" stroke="#fff" strokeWidth="1.3" />
        </Svg>
      </Btn>
      <Btn label="Wi-Fi" className="mr-[13px]">
        <Svg w={17} h={14}>
          <path d="M1 5.500a10.500 10.500 0 0 1 15 0" stroke="#bcbcbc" strokeWidth="1.2" />
          <path d="M3.500 8a7 7 0 0 1 10 0" stroke="#999" strokeWidth="1.2" />
          <path d="M5.500 10.500a4.200 4.200 0 0 1 6 0" stroke="#222" strokeWidth="1.5" />
          <circle cx="8.500" cy="12.300" r="1.500" fill="#222" />
        </Svg>
      </Btn>
      <Btn label="Volume" className="mr-[13px]">
        <Svg w={18} h={15}>
          <path d="M1 5h3l4-3.500v12L4 10H1z" stroke="#333" strokeWidth="1.2" />
          <path d="M10.500 5c1.200 1.500 1.200 3.500 0 5" stroke="#333" strokeWidth="1.2" />
          <path d="M12.700 3c2 2.500 2 6.500 0 9M15 1.500c2.600 3.500 2.600 8.500 0 12" stroke="#bbb" strokeWidth="1.1" />
        </Svg>
      </Btn>
      <Btn label="Battery" className="mr-[17px]">
        <Svg w={23} h={12}>
          <rect x=".7" y=".7" width="19.500" height="10.600" rx="3" stroke="#333" strokeWidth="1.3" />
          <rect x="2.500" y="2.500" width="6.500" height="7" rx="1" fill="#222" />
          <path d="M22 4v4" stroke="#333" strokeWidth="1.6" />
        </Svg>
      </Btn>
      <span className="flex flex-col text-right leading-[18px]">
        <span>1:27 AM</span>
        <span>09/09/2026</span>
      </span>
    </div>
  </div>
);

export default function App() {
  return (
    <div className="flex h-screen flex-col overflow-hidden bg-[#262626] font-['Open_Sans','Noto_Sans',sans-serif]">
      <TitleBar />
      <MenuBar />
      <Ribbon />
      <FormulaBar />
      <Sheet />
      <SheetTabs />
      <StatusBar />
      <Taskbar />
    </div>
  );
}
